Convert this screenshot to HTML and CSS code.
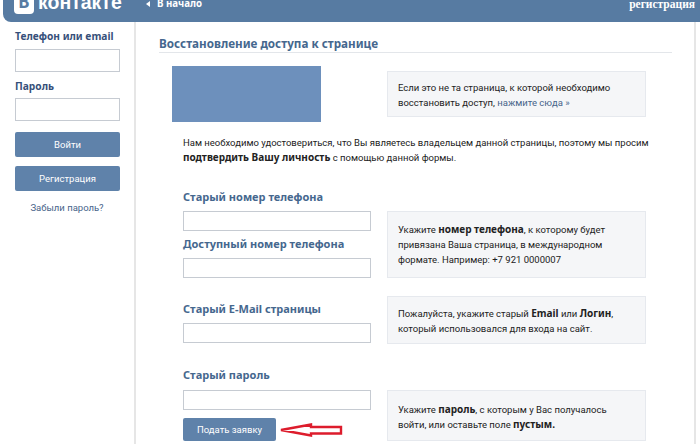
FILE: index.html
```html
<!DOCTYPE html>
<html lang="ru">

<head>
  <meta charset="UTF-8">
  <title>Восстановление доступа к странице</title>
  <link rel="stylesheet" href="styles.css">
</head>

<body>
  <div class="header">
    <div class="logo"><span class="logo-mark">В</span><span class="logo-text">контакте</span></div>
    <a class="home-link"><span class="home-arrow"></span>В начало</a>
    <a class="signup-link">регистрация</a>
  </div>

  <div class="container">
    <div class="sidebar">
      <label class="side-label">Телефон или email</label>
      <input class="side-input" type="text">
      <label class="side-label side-label-pass">Пароль</label>
      <input class="side-input" type="text">
      <button class="btn side-btn login-btn">Войти</button>
      <button class="btn side-btn reg-btn">Регистрация</button>
      <a class="forgot">Забыли пароль?</a>
    </div>

    <div class="content">
      <h2 class="page-title">Восстановление доступа к странице</h2>

      <div class="photo-row">
        <div class="photo"></div>
        <div class="note note-first">Если это не та страница, к которой необходимо восстановить доступ, <a class="note-link">нажмите сюда »</a></div>
      </div>

      <p class="intro">Нам необходимо удостовериться, что Вы являетесь владельцем данной страницы, поэтому мы просим <b>подтвердить Вашу личность</b> с помощью данной формы.</p>

      <div class="form-row row-phone">
        <div class="fields">
          <label class="field-label">Старый номер телефона</label>
          <input class="field-input" type="text">
          <label class="field-label field-label-next">Доступный номер телефона</label>
          <input class="field-input" type="text">
        </div>
        <div class="note note-phone">Укажите <b>номер телефона</b>, к которому будет привязана Ваша страница, в международном формате. Например: +7 921 0000007</div>
      </div>

      <div class="form-row row-email">
        <div class="fields">
          <label class="field-label">Старый E-Mail страницы</label>
          <input class="field-input" type="text">
        </div>
        <div class="note note-email">Пожалуйста, укажите старый <b>Email</b> или <b>Логин</b>, который использовался для входа на сайт.</div>
      </div>

      <div class="form-row row-pass">
        <div class="fields">
          <label class="field-label">Старый пароль</label>
          <input class="field-input" type="text">
          <div class="submit-line">
            <button class="btn submit-btn">Подать заявку</button>
            <svg class="arrow" width="64" height="14" viewBox="0 0 64 14">
              <path d="M2 7 L32 1.5 L32 4 L62 4 L62 10.5 L32 10.5 L32 12.5 Z" fill="#fff" stroke="#dd1c2c" stroke-width="2.4"/>
            </svg>
          </div>
        </div>
        <div class="note note-pass">Укажите <b>пароль</b>, с которым у Вас получалось войти, или оставьте поле <b>пустым.</b></div>
      </div>
    </div>
  </div>
</body>

</html>
```

FILE: styles.css
```css
body,
html {
  height: 100%;
  margin: 0;
  overflow: hidden;
  background-color: #fff;
  font-family: Roboto, Arial, sans-serif;
  font-size: 9.5px;
  color: #222;
}

b {
  font-family: "Noto Sans", Arial, sans-serif;
  font-size: 10px;
}

.header {
  display: flex;
  align-items: flex-end;
  height: 22px;
  margin-left: 3px;
  overflow: hidden;
  background-color: #577ba2;
  border-bottom-left-radius: 8px;
  color: #fff;
  font-family: "Noto Sans", Arial, sans-serif;
  font-size: 9.7px;
  font-weight: bold;
}

.logo {
  display: flex;
  align-items: flex-end;
  flex-shrink: 0;
  gap: 4px;
  width: 132px;
  margin-left: 11px;
  margin-bottom: 8px;
}

.logo-mark {
  width: 20px;
  height: 20px;
  line-height: 16px;
  background-color: #fff;
  border-radius: 4px;
  color: #577ba2;
  font-size: 17px;
  text-align: center;
}

.logo-text {
  margin-bottom: 2px;
  font-family: "Liberation Sans", Arial, sans-serif;
  font-size: 19.5px;
  line-height: 20px;
}

.home-link {
  display: flex;
  align-items: center;
  margin-bottom: 12px;
  line-height: 12px;
}

.home-arrow {
  width: 0;
  height: 0;
  margin-right: 7px;
  border-top: 3px solid transparent;
  border-bottom: 3px solid transparent;
  border-right: 4px solid #fff;
}

.signup-link {
  margin-left: auto;
  margin-right: 5px;
  margin-bottom: 12px;
  line-height: 12px;
  font-family: "Liberation Serif", serif;
  font-size: 11.5px;
}

.container {
  display: flex;
  height: 422px;
}

.sidebar {
  display: flex;
  flex-direction: column;
  flex-shrink: 0;
  box-sizing: border-box;
  width: 136px;
  padding: 8px 15px 0;
  border-right: 2px solid #e6e6e6;
}

.side-label {
  height: 12px;
  line-height: 12px;
  color: #36507a;
  font-family: "Noto Sans", Arial, sans-serif;
  font-size: 10.2px;
  font-weight: bold;
}

.side-label-pass {
  margin-top: 8px;
}

.side-input {
  box-sizing: border-box;
  width: 105px;
  height: 23px;
  margin-top: 7px;
  padding: 0;
  background-color: #fff;
  border: 1px solid #c6cbd2;
}

.side-label-pass + .side-input {
  margin-top: 6px;
}

.btn {
  padding: 0;
  background-color: #5f82aa;
  border: none;
  border-radius: 2px;
  color: #fff;
  font-family: inherit;
  font-size: 9.5px;
}

.side-btn {
  width: 105px;
  height: 25px;
}

.login-btn {
  margin-top: 11px;
}

.reg-btn {
  margin-top: 9px;
}

.forgot {
  margin-top: 11px;
  line-height: 12px;
  color: #47648a;
  text-align: center;
}

.content {
  box-sizing: border-box;
  width: 560px;
  height: 100%;
  padding: 13px 0 0 23px;
  border-right: 2px solid #e6e6e6;
}

.page-title {
  width: 513px;
  height: 16px;
  margin: 0;
  padding-bottom: 1px;
  line-height: 16px;
  border-bottom: 1px solid #e3e6ea;
  color: #45678e;
  font-family: "Noto Sans", Arial, sans-serif;
  font-size: 11.7px;
}

.photo-row {
  display: flex;
  align-items: flex-start;
  margin-top: 13px;
  margin-left: 13px;
}

.photo {
  width: 149px;
  height: 56px;
  background-color: #6d90bc;
}

.note {
  box-sizing: border-box;
  width: 259px;
  padding: 0 10px;
  line-height: 15px;
  background-color: #f5f6f8;
  border: 1px solid #e6e9ee;
}

.note-first {
  margin-top: 5px;
  margin-left: 66px;
  padding-top: 8px;
  height: 46px;
}

.note-link {
  color: #47648a;
}

.intro {
  width: 470px;
  margin: 13px 0 0 24px;
  line-height: 15px;
}

.form-row {
  display: flex;
  align-items: flex-start;
  gap: 16px;
  margin-left: 24px;
}

.fields {
  width: 188px;
}

.field-label {
  display: block;
  height: 14px;
  line-height: 12px;
  color: #45678e;
  font-family: "Noto Sans", Arial, sans-serif;
  font-size: 11px;
  font-weight: bold;
}

.field-input {
  display: block;
  box-sizing: border-box;
  width: 188px;
  height: 20px;
  margin-top: 6px;
  padding: 0;
  background-color: #fff;
  border: 1px solid #c6cbd2;
}

.field-label-next {
  margin-top: 7px;
}

.row-phone {
  margin-top: 26px;
}

.note-phone {
  height: 67px;
  margin-top: 20px;
  padding-top: 10px;
}

.row-email {
  margin-top: 25px;
}

.note-email {
  height: 48px;
  margin-top: -7px;
  padding-top: 9px;
}

.row-pass {
  margin-top: 25px;
}

.row-pass .field-input {
  margin-top: 7px;
}

.note-pass {
  height: 51px;
  margin-top: 21px;
  padding-top: 11px;
}

.submit-line {
  display: flex;
  align-items: center;
  gap: 3px;
  margin-top: 8px;
}

.submit-btn {
  flex-shrink: 0;
  width: 93px;
  height: 23px;
}

.arrow {
  flex-shrink: 0;
}
```
